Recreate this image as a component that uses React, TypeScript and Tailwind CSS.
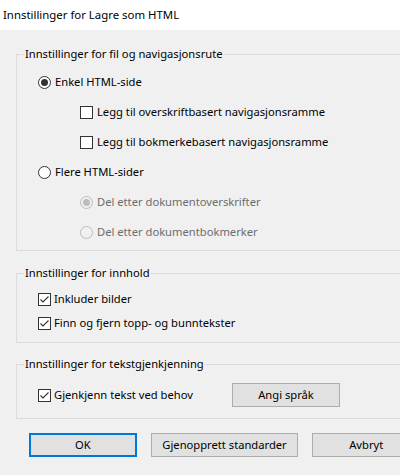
import React from "react";

const font = { fontFamily: '"Noto Sans", "Open Sans", sans-serif' };

function Radio({ checked, disabled }: { checked?: boolean; disabled?: boolean }) {
  const border = disabled ? "#bcbcbc" : "#333333";
  const bg = disabled ? "#f0f0f0" : "#ffffff";
  return (
    <svg width="13" height="13" viewBox="0 0 13 13" className="shrink-0">
      <circle cx="6.5" cy="6.5" r="6" fill={bg} stroke={border} strokeWidth="1" />
      {checked && <circle cx="6.5" cy="6.5" r="3.5" fill={disabled ? "#bcbcbc" : "#333333"} />}
    </svg>
  );
}

function Check({ checked }: { checked?: boolean }) {
  return (
    <svg width="13" height="13" viewBox="0 0 13 13" className="shrink-0">
      <rect x="0.5" y="0.5" width="12" height="12" fill="#ffffff" stroke="#333333" strokeWidth="1" />
      {checked && (
        <path d="M2.5 6.5 L5 9 L10.5 3.5" fill="none" stroke="#333333" strokeWidth="1.1" />
      )}
    </svg>
  );
}

function Row({
  children,
  h,
  className = "",
}: {
  children: React.ReactNode;
  h: string;
  className?: string;
}) {
  return <div className={`flex items-center ${h} ${className}`}>{children}</div>;
}

export default function App() {
  return (
    <div
      className="w-[400px] h-[475px] overflow-hidden bg-[#f0f0f0] text-[11.2px] text-black leading-[16px]"
      style={font}
    >
      <div className="h-[30px] bg-white flex items-center pl-[3px] text-[11.4px]">
        Innstillinger for Lagre som HTML
      </div>
      <div className="w-[420px] pl-[16px] pt-[16px]">
        <fieldset className="border border-[#dcdcdc] pb-[3px]">
          <legend className="ml-[7px] px-[1px] leading-[16px]">
            Innstillinger for fil og navigasjonsrute
          </legend>
          <div className="pt-[5px] pl-[21px]">
            <Row h="h-[30px]" className="gap-[4px]">
              <Radio checked />
              <span>Enkel HTML-side</span>
            </Row>
            <Row h="h-[30px]" className="gap-[4px] pl-[42px]">
              <Check />
              <span>Legg til overskriftbasert navigasjonsramme</span>
            </Row>
            <Row h="h-[30px]" className="gap-[4px] pl-[42px]">
              <Check />
              <span>Legg til bokmerkebasert navigasjonsramme</span>
            </Row>
            <Row h="h-[30px]" className="gap-[4px]">
              <Radio />
              <span>Flere HTML-sider</span>
            </Row>
            <Row h="h-[30px]" className="gap-[4px] pl-[42px] text-[#6d6d6d]">
              <Radio checked disabled />
              <span>Del etter dokumentoverskrifter</span>
            </Row>
            <Row h="h-[30px]" className="gap-[4px] pl-[42px] text-[#6d6d6d]">
              <Radio disabled />
              <span>Del etter dokumentbokmerker</span>
            </Row>
          </div>
        </fieldset>

        <fieldset className="mt-[14px] border border-[#dcdcdc] pb-[7px]">
          <legend className="ml-[7px] px-[1px] leading-[16px]">Innstillinger for innhold</legend>
          <div className="pt-[6px] pl-[21px]">
            <Row h="h-[24px]" className="gap-[3px]">
              <Check checked />
              <span>Inkluder bilder</span>
            </Row>
            <Row h="h-[24px]" className="gap-[3px]">
              <Check checked />
              <span>Finn og fjern topp- og bunntekster</span>
            </Row>
          </div>
        </fieldset>

        <fieldset className="mt-[13px] border border-[#dcdcdc] pb-[11px]">
          <legend className="ml-[7px] px-[1px] leading-[16px]">
            Innstillinger for tekstgjenkjenning
          </legend>
          <div className="pt-[11px] pl-[21px] flex items-center">
            <Row h="h-[24px]" className="gap-[3px] w-[194px]">
              <Check checked />
              <span>Gjenkjenn tekst ved behov</span>
            </Row>
            <button className="h-[24px] w-[108px] bg-[#e1e1e1] border border-[#adadad] flex items-center justify-center">
              Angi språk
            </button>
          </div>
        </fieldset>

        <div className="mt-[14px] flex items-center pl-[13px] gap-[14px]">
          <button className="h-[24px] w-[109px] bg-[#e1e1e1] border-2 border-[#0078d7] flex items-center justify-center">
            OK
          </button>
          <button className="h-[24px] w-[150px] bg-[#e1e1e1] border border-[#adadad] flex items-center justify-center">
            Gjenopprett standarder
          </button>
          <button className="h-[24px] w-[109px] bg-[#e1e1e1] border border-[#adadad] flex items-center justify-center">
            Avbryt
          </button>
        </div>
      </div>
    </div>
  );
}
